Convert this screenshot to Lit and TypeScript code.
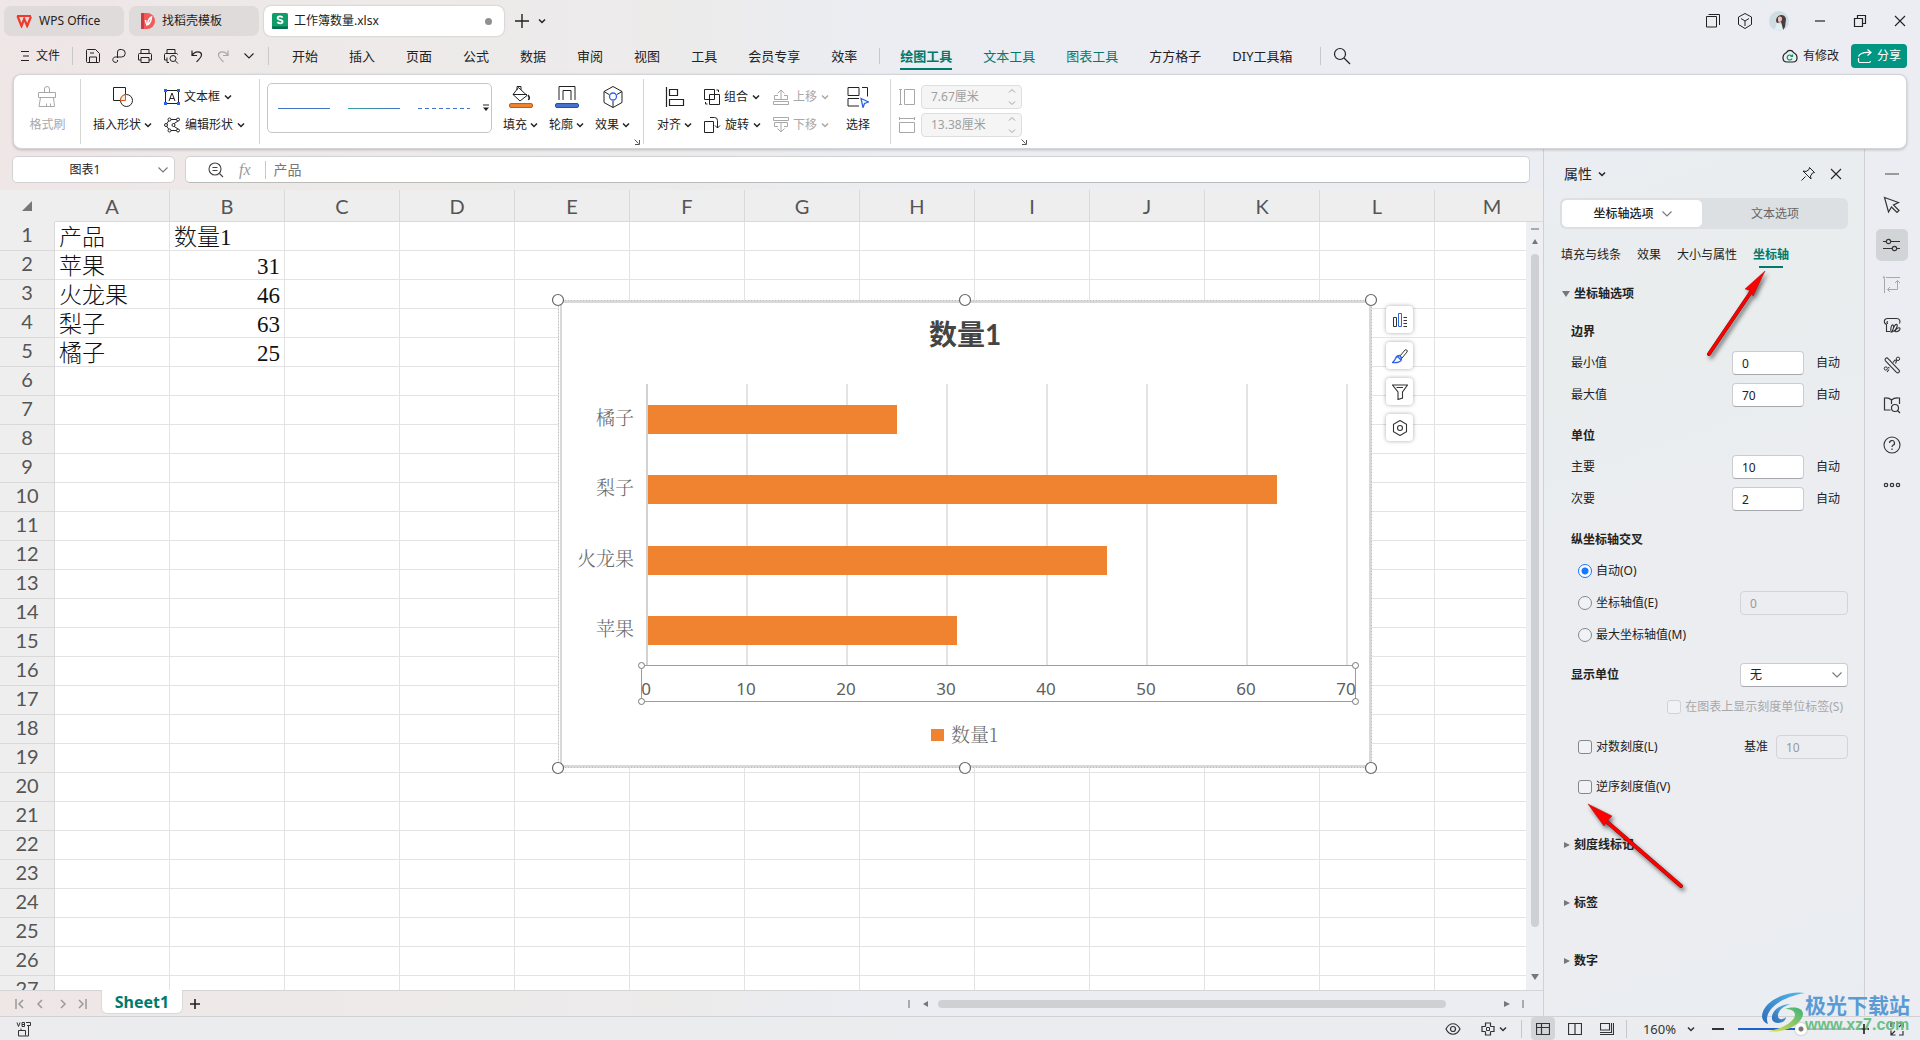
import { LitElement, html, svg, css, TemplateResult, SVGTemplateResult } from "lit";
import { customElement } from "lit/decorators.js";
import { classMap } from "lit/directives/class-map.js";

const icon = (w: number, h: number, body: SVGTemplateResult): TemplateResult =>
  html`<svg class="ic" width=${w} height=${h} viewBox="0 0 ${w} ${h}" fill="none" stroke="currentColor" aria-hidden="true">${body}</svg>`;

const chev = () => icon(8, 6, svg`<path d="M1 1.500l3 3 3-3" stroke-width="1.500"/>`);
const thinChev = () => icon(12, 8, svg`<path d="M1.500 1.500L6 6l4.500-4.500" stroke-width="1.100"/>`);

const I = {
  wps: icon(16, 14, svg`<path d="M1 2h14M1.500 2l4 10L8.200 5l3 7L15 2.500" stroke="#f0392b" stroke-width="2.200"/>`),
  docer: icon(14, 16, svg`<path d="M0 0h6a8 8 0 0 1 0 16H0z" fill="#f05a5a" stroke="none"/><path d="M0 0h3v16H0z" fill="#c93c40" stroke="none"/><path d="M5 12c4 0 5-3 5.500-8C8 5 7 8 6.500 11M6.500 12C5 11 4.500 9 4.500 7" stroke="#fff" stroke-width="1.500"/>`),
  sheet: icon(16, 16, svg`<rect width="16" height="16" rx="1.500" fill="#0f9d6a" stroke="none"/><path d="M0 13.500h16v1a1.500 1.500 0 0 1-1.500 1.500h-13A1.500 1.500 0 0 1 0 14.500z" fill="#0a6a4a" stroke="none"/><path d="M10.600 4.600C9.800 3 5.600 3 5.600 5.200c0 2.200 5 1.100 5 3.400 0 2.300-4.300 2.100-5.200.4" stroke="#fff" stroke-width="1.800"/>`),
  plus: icon(14, 14, svg`<path d="M7 0v14M0 7h14" stroke-width="1.400"/>`),
  menu: icon(10, 12, svg`<path d="M1 1.500h8M3 6h6M1 10.500h8" stroke-width="1.200"/>`),
  save: icon(16, 16, svg`<path d="M1.500 2.500a1 1 0 0 1 1-1h8l4 4v8a1 1 0 0 1-1 1h-11a1 1 0 0 1-1-1zM4.500 14v-5h7v5M5 5h4"/>`),
  pdf: icon(16, 16, svg`<path d="M6.500 10V4a2.500 2.500 0 0 1 2.500-2.500h1.500a3 3 0 0 1 0 7.500H4.500a2.700 2.700 0 1 0 2 4.500V12"/>`),
  print: icon(16, 16, svg`<path d="M4 5V1.500h8V5M4 12H1.500V6.500a1 1 0 0 1 1-1h11a1 1 0 0 1 1 1V12H12M4 9.500h8v5H4z"/>`),
  preview: icon(16, 16, svg`<path d="M4 5V1.500h8V5M4 12H1.500V6.500a1 1 0 0 1 1-1h11a1 1 0 0 1 1 1M4 9.500v5h2"/><circle cx="10" cy="10.500" r="3"/><path d="M12.200 12.700L15 15.500"/>`),
  undo: icon(14, 14, svg`<path d="M2 1.500v5h5M2 6.500C5 1.500 11.500 2 11.500 6c0 3-3 4.500-5 7" stroke-width="1.200"/>`),
  redo: icon(14, 14, svg`<path d="M12 1.500v5H7M12 6.500C9 1.500 2.500 2 2.500 6c0 3 3 4.500 5 7" stroke-width="1.200"/>`),
  search: icon(18, 18, svg`<circle cx="7" cy="7" r="5.500" stroke-width="1.200"/><path d="M11 11l6 6" stroke-width="1.300"/>`),
  cloud: icon(18, 16, svg`<path d="M5.500 4.500a4 4 0 0 1 7 0c5 2.500 4.500 9.500-.5 9.500H6C1 14 .5 7 5.500 4.500z" stroke-width="1.200"/><path d="M11.500 6.500v2H9.500M11 8.500a2.500 2.500 0 1 0 0 2" stroke="#0a9a5a" stroke-width="1.200"/>`),
  share: icon(16, 16, svg`<path d="M1.500 10v3a1.500 1.500 0 0 0 1.500 1.500h9a1.500 1.500 0 0 0 1.500-1.500M1.500 8.500C3 4.500 7 4 13.500 4.500M10.500 1.500l3.500 3-3.500 3" stroke-width="1.200"/>`),
  win: icon(16, 16, svg`<path d="M1.500 3.500h10v10.500h-10zM3.500 1.500h11V12" />`),
  cube: icon(16, 18, svg`<path d="M8 1.500l6.500 3.500v7.500L8 16.500l-6.500-4V5zM4 6.500l4 2.500 4-2.500M8 9v5"/>`),
  min: icon(12, 12, svg`<path d="M1 6h10" stroke-width="1.200"/>`),
  restore: icon(14, 14, svg`<path d="M1.500 4.500h8v8h-8zM4.500 4.500v-3h8v8h-3" stroke-width="1.200"/>`),
  close: icon(12, 12, svg`<path d="M1 1l10 10M11 1L1 11" stroke-width="1.100"/>`),
  painter: icon(22, 22, svg`<path d="M2.500 6.500h17v5h-17zM8.500 6.500V3a2.500 2.500 0 0 1 5 0v3.500M4.500 11.500L3 20.500h15.500l-1-9M10.500 20.500v-3M14.500 20.500v-3"/>`),
  shapes: icon(22, 22, svg`<path d="M13.500 8V1.500h-12v13H8" /><circle cx="14.500" cy="14.500" r="6"/><path d="M8.500 14.500A6 6 0 0 1 13.500 8.600v5.900z" stroke="#d05a1a" fill="#fde7da"/>`),
  textbox: icon(16, 16, svg`<path d="M3 1.500h10M3 14.500h10M1.500 3v10M14.500 3v10M5 12l3-8 3 8M6 9.500h4"/><path d="M0 0h3v3H0zM13 0h3v3h-3zM0 13h3v3H0zM13 13h3v3h-3z" fill="#2f62e8" stroke="none"/>`),
  editshape: icon(17, 16, svg`<path d="M6 2.500h7M5 3.500L2.500 7M2.500 9L5 12.500M6 13.500h7M14 4L9.500 7M9.500 9L14 12"/><circle cx="5.500" cy="2.500" r="1.500" fill="#fff"/><circle cx="14" cy="2.500" r="1.500" fill="#fff"/><circle cx="2" cy="8" r="1.500" fill="#fff"/><circle cx="9.500" cy="8" r="1.500" fill="#fff"/><circle cx="5.500" cy="13.500" r="1.500" fill="#fff"/><circle cx="14" cy="13.500" r="1.500" fill="#fff"/>`),
  more: icon(8, 8, svg`<path d="M1 1h6" /><path d="M1 3.500h6L4 7z" fill="currentColor" stroke="none"/>`),
  fill: icon(26, 24, svg`<path d="M10.500 2.500l8.500 8-7 5.500-7-6.500zM9 5V1.500h4V5M5 9.500h14"/><path d="M20 10c2 3 1.500 4.500 0 4.500" stroke-width="1.500"/><rect x="1.500" y="18.500" width="23" height="4" rx="1.500" fill="#ef8330" stroke="#b5611e"/>`),
  outline: icon(26, 24, svg`<path d="M5 15V1.500h16V15M9 15V5.500h8V15"/><rect x="1.500" y="18.500" width="23" height="4" rx="1.500" fill="#4472d0" stroke="#2b4fa0"/>`),
  effect: icon(22, 24, svg`<path d="M11 1.500l9 5v11l-9 5-9-5v-11zM2 6.500l5 3M20 6.500l-5 3M11 22.500V16"/><circle cx="11" cy="11.500" r="3.500" stroke="#2f62e8" stroke-width="1.300"/>`),
  align: icon(20, 20, svg`<path d="M1.500 0v20M4.500 2.500h8v6h-8zM4.500 12.500h14v6h-14z" stroke-width="1.200"/>`),
  group: icon(16, 16, svg`<path d="M.5.5h10v10H.5zM5.500 5.500h10v10h-10zM14.500 1v2M14.500 1h-2M1.500 13v2M1.500 15h2"/>`),
  rotate: icon(17, 16, svg`<path d="M.5 4.500h9v11h-9zM6 .5h4.500a3 3 0 0 1 3 3V11M11 8.500l2.500 2.500L16 8.500"/>`),
  up: icon(16, 16, svg`<path d="M8 11V1M4.500 4.500L8 1l3.500 3.500M5 6.500H1.500v4h13v-4H11M.5 12.500h15v3H.5z"/>`),
  down: icon(16, 16, svg`<path d="M8 5v10M4.500 11.500L8 15l3.500-3.500M5 9.500H1.500v-4h13v4H11M.5.5h15v3H.5z"/>`),
  select: icon(22, 22, svg`<path d="M1 9.500V1.500h11v8zM15 1.500h5.500v9M12 12.500H1v7.500h11"/><path d="M14 12.500l7.500 3.500-4 1.500L16 21.500z" stroke="#2f62e8" stroke-width="1.300"/>`),
  hgt: icon(16, 16, svg`<path d="M5.500.5h10v15h-10zM1.500 1v14M0 .5h3M0 15.500h3"/>`),
  wid: icon(16, 16, svg`<path d="M.5 5.500h15v10H.5zM1 1.500h14M.5 0v3M15.500 0v3"/>`),
  launch: icon(6, 6, svg`<path d="M.5.5l4 4M5.500 1v4.500H1" />`),
  spin: icon(8, 18, svg`<path d="M1 4.500l3-3 3 3M1 13.500l3 3 3-3"/>`),
  zoomIc: icon(16, 16, svg`<circle cx="7" cy="7" r="6" stroke-width="1.100"/><path d="M4.500 5.500h5M4.500 8.500h5M11.500 11.500L15 15" stroke-width="1.100"/>`),
  pin: icon(16, 16, svg`<path d="M9.500 1.500l5 5-2 .5-2 3 .5 3-8-8 3 .5 3-2zM5.500 10.500L1.500 14.500"/>`),
  cursor: icon(18, 18, svg`<path d="M1.500 1.500l14 5-5 2.500 5.500 5.500-2 2-5.500-5.500-3 5z" stroke-width="1.200"/>`),
  sliders: icon(18, 16, svg`<path d="M0 4.500h3M8 4.500h9M0 11.500h9M14 11.500h3" stroke-width="1.200"/><circle cx="5.500" cy="4.500" r="2.200" stroke-width="1.200"/><circle cx="11.500" cy="11.500" r="2.200" stroke-width="1.200"/>`),
  frame: icon(18, 18, svg`<path d="M3 1.500h14M1.500 3v14M14.500 4.500v9h-10M12 7l2.500-2.500L17 7M7 11l-2.500 2.500L7 16"/><path d="M0 .5h2v2H0z" fill="currentColor" stroke="none"/>`),
  idea: icon(18, 18, svg`<path d="M7 15.500H3.500v-7C0 7 1 2.500 4.500 2.500h9c3.500 0 4 3 3 5M5 5.500c-1.500 0-1.500 2 0 2M8 16c-.8-4 .8-8 2-7s.5 6-2 7zM9 16c1.500-5 3.500-8.500 4.800-7.500S13 15 9 16zM12 15.500c1-2.500 3.500-4.500 4.700-3.500s-1.200 4.500-4.700 3.500z" stroke-width="1.100"/>`),
  tools: icon(18, 18, svg`<path d="M2.500 4.800a1.700 1.700 0 0 1 2.600-2.200L16 14a1.700 1.700 0 0 1-2.500 2.300z" stroke-width="1.100"/><circle cx="15" cy="2.800" r="1.700"/><circle cx="2.800" cy="12.500" r="1.600"/><path d="M10 6.500l2-2.500 2.500.5M5 11.500l1.500.5M6 13.500L4 16M13.500 5l-1 2.500" stroke-width="1.100"/>`),
  book: icon(18, 18, svg`<path d="M8.500 4C6 1.500 3.500 2 1.500 2v12h6M8.500 4c2.500-2.500 5-2 8-2v6M8.500 4v4" stroke-width="1.200"/><circle cx="12" cy="12" r="3.500" stroke-width="1.200"/><path d="M14.500 14.500L17 17" stroke-width="1.200"/>`),
  help: icon(18, 18, svg`<circle cx="9" cy="9" r="8" stroke-width="1.100"/><path d="M6.500 7a2.500 2.500 0 1 1 3.500 2.300c-.8.400-1 .8-1 1.700M9 12.500V14" stroke-width="1.200"/>`),
  dots: icon(18, 6, svg`<circle cx="3" cy="3" r="1.700" stroke-width="1.200"/><circle cx="9" cy="3" r="1.700" stroke-width="1.200"/><circle cx="15" cy="3" r="1.700" stroke-width="1.200"/>`),
  minus: icon(14, 4, svg`<path d="M0 2h14" stroke-width="2" stroke="#9a9a9a"/>`),
  vb: icon(16, 16, svg`<path d="M1 1.500l1.500 4L4 1.500M6 1.500v4h2.500v-4zM6 3.500h2.500M10 1.500h4.500v3H11M12.500 5v10H2.500V9.500h7v5M5 9.500V7.500"/>`),
  eye: icon(16, 14, svg`<path d="M1 7c3.500-7 10.500-7 14 0-3.500 7-10.500 7-14 0z" stroke-width="1.200"/><circle cx="8" cy="7" r="2.500" stroke-width="1.200"/>`),
  focus: icon(14, 14, svg`<path d="M4.500 4.500V1h5v3.500M9.500 4.500H13v5H9.500M9.500 9.500V13h-5V9.500M4.500 9.500H1v-5h3.500" stroke-width="1.200"/><path d="M5.500 5.500h3v3h-3z"/>`),
  normal: icon(14, 12, svg`<path d="M.5.5h13v11H.5zM.5 4.500h13M5.500.5v11" stroke-width="1.200"/>`),
  pageb: icon(14, 12, svg`<path d="M.5.5h13v11H.5zM7 .5v11" stroke-width="1.200"/>`),
  layout: icon(14, 12, svg`<path d="M.5.500h9v6.500h-9zM11.500 0v9.500H0M13.500 0v11.500H0" stroke-width="1.100"/>`),
  full: icon(14, 14, svg`<path d="M8.500 1h4.500v4.500M13 1L9 5M5.500 13H1V8.500M1 13l4-4M1 5V1h4M13 9v4H9" stroke-width="1.200"/>`),
  chart: icon(16, 16, svg`<path d="M1.500 5.500h3v9h-3z"/><path d="M6.500 1.500h3v13h-3z" stroke="#2f62e8"/><path d="M11.500 5.500H15M11.500 8.500H15M11.500 11.500H15M11.500 14.500H15"/>`),
  brush: icon(16, 16, svg`<path d="M8 8l5-6c1-1 3 .5 2 2l-5 6z"/><path d="M8 7.500c-3 0-4 1.500-4.500 3S2 13.500.500 14.500c4 .5 9 0 9-4zM5.500 8.500l3.500 3.500" stroke="#2f62e8" stroke-width="1.300"/>`),
  funnel: icon(16, 16, svg`<path d="M.5 1h15L10.500 8v6l-4.500 1.500V8zM4.500 3.500h6.500" stroke-width="1.100"/>`),
  hex: icon(16, 16, svg`<path d="M8 .5l6.500 3.800v7.400L8 15.500l-6.500-3.800V4.300z" stroke-width="1.100"/><circle cx="8" cy="8" r="2.500" stroke-width="1.100"/>`),
};

@customElement("bar-chart")
class BarChart extends LitElement {
  static styles = css`
    :host { display: block; }
    svg { display: block; }
    .zh { font-family: "Noto Serif CJK SC", "Noto Sans CJK SC", serif; font-weight: 300; font-size: 19px; fill: #6a6a6a; }
    .title { font-family: Lato, "Noto Sans CJK SC", sans-serif; font-weight: 700; font-size: 28px; fill: #444; }
    .tick { font-family: "Noto Sans", sans-serif; font-size: 17px; fill: #5e5e5e; }
  `;
  rows = [
    { name: "橘子", value: 25 },
    { name: "梨子", value: 63 },
    { name: "火龙果", value: 46 },
    { name: "苹果", value: 31 },
  ];
  render() {
    const ticks = [0, 10, 20, 30, 40, 50, 60, 70];
    const handles = [[8, 8], [415, 8], [821, 8], [8, 476], [415, 476], [821, 476]];
    return html`<svg width="830" height="484" viewBox="0 0 830 484" role="img" aria-label="数量1">
      <rect x="8" y="8" width="814" height="468" fill="#fff" />
      <rect x="8.5" y="8.500" width="813" height="467" fill="none" stroke="#bdbdbd" stroke-dasharray="2 1" />
      <rect x="11" y="10" width="809" height="464" fill="#fff" stroke="#d8d8d8" stroke-width="2" />
      <text class="title" x="415" y="53" text-anchor="middle">数量1</text>
      ${ticks.map((t) => svg`<rect x=${96 + t * 10} y="92" width="2" height="281" fill=${t ? "#e3e3e3" : "#d2d2d2"} />`)}
      ${this.rows.map((r, i) => svg`
        <rect x="98" y=${113 + Math.round(i * 70.4)} width=${r.value * 10 - 1} height="29" fill="#ef8330" />
        <text class="zh" x="84" y=${133 + Math.round(i * 70.4)} text-anchor="end">${r.name}</text>`)}
      <rect x="91.5" y="373.500" width="714" height="36" fill="none" stroke="#9a9da6" />
      ${ticks.map((t) => svg`<text class="tick" x=${96 + t * 10} y="403" text-anchor="middle">${t}</text>`)}
      ${[[91, 373], [805, 373], [91, 409], [805, 409]].map((p) => svg`<circle cx=${p[0] + 0.5} cy=${p[1] + 0.5} r="3" fill="#fff" stroke="#777" />`)}
      <rect x="381" y="437" width="13" height="12" fill="#ef8330" />
      <text class="zh" x="401" y="450">数量1</text>
      ${handles.map((p) => svg`<circle cx=${p[0]} cy=${p[1]} r="5.500" fill="#fff" stroke="#666" stroke-width="1.200" />`)}
    </svg>`;
  }
}

@customElement("app-root")
class AppRoot extends LitElement {
  static styles = css`
    :host { display: block; }
    * { box-sizing: border-box; }
    .app {
      display: flex; flex-direction: column; position: relative; height: 100vh; overflow: hidden;
      font: 12px/16px "Noto Sans", "Noto Sans CJK SC", sans-serif; color: #222;
      background: linear-gradient(90deg, #efe6e6 0, #edeae9 20%, #ecebeb 36%, #ebedf2 46%, #ebedf2 100%);
    }
    button, input, select { font: inherit; color: inherit; margin: 0; }
    button { border: 0; padding: 0; background: none; display: inline-flex; align-items: center; justify-content: center; white-space: nowrap; }
    a { color: inherit; text-decoration: none; white-space: nowrap; }
    .ic { display: block; flex: none; }
    .row { display: flex; align-items: center; }
    .grow { flex: 1; }
    .off { color: #a8a8a8; }

    .titlebar { display: flex; align-items: center; height: 42px; flex: none; padding: 0 14px 0 4px; gap: 5px; }
    .wtab { height: 30px; border-radius: 7px; background: #dfdbda; display: flex; align-items: center; justify-content: flex-start; padding: 0 12px; gap: 7px; }
    .wtab.home { width: 120px; }
    .wtab.docer { width: 130px; }
    .wtab.on { width: 240px; background: #fff; padding: 0 12px 0 8px; gap: 6px; box-shadow: 0 0 2px #0004; }
    .dot { width: 7px; height: 7px; border-radius: 50%; background: #909090; margin-left: auto; }
    .newtab { gap: 9px; margin-left: 6px; }
    .wins { gap: 16px; }
    .wbtns { gap: 27px; padding-left: 20px; }
    .avatar { width: 20px; height: 20px; }

    .menubar { display: flex; align-items: center; height: 28px; flex: none; padding: 0 13px 0 20px; }
    .file { gap: 6px; margin-right: 12px; }
    .vsep { width: 1px; height: 18px; background: #c8c8ca; flex: none; }
    .quick { gap: 10px; padding: 0 11px 0 12px; }
    .quick button { width: 16px; height: 16px; }
    .menu { display: flex; gap: 31px; padding: 0 27px 0 23px; font-size: 13px; line-height: 28px; }
    .menu .ctx { color: #007a6c; }
    .menu .on { font-weight: 700; box-shadow: inset 0 -2px #007a6c; }
    .menu .split { width: 1px; height: 16px; background: #c8c8ca; margin: 6px -11px 0 -9px; }
    .find { padding-left: 12px; }
    .modified { gap: 4px; margin-right: 12px; }
    .share { background: #009682; color: #fff; height: 24px; padding: 0 6px; gap: 4px; border-radius: 4px; width: 56px; }

    .ribbon { display: flex; flex: none; height: 75px; margin: 4px 13px 0; background: #fff; border: 1px solid #d3d4d8; border-radius: 8px; box-shadow: 0 1px 3px #0003; position: relative; z-index: 1; }
    .grp { display: flex; padding-top: 8px; position: relative; }
    .grp + .grp::before { content: ""; position: absolute; left: -1px; top: 4px; bottom: 4px; width: 1px; background: #d5d5d5; }
    .big { display: grid; grid-template-rows: 28px 28px; justify-items: center; align-items: center; }
    .lbl { display: flex; align-items: center; gap: 3px; }
    .col { display: grid; grid-template-rows: 28px 28px; align-items: center; justify-items: start; }
    .col button { gap: 4px; }
    .g1 { width: 67px; justify-content: center; }
    .g2 { width: 179px; padding-left: 12px; gap: 12px; }
    .g3 { width: 384px; padding-left: 7px; gap: 11px; }
    .g4 { width: 247px; padding-left: 13px; gap: 12px; }
    .g5 { width: 140px; padding-left: 8px; }
    .g5 label { gap: 6px; height: 28px; }
    .gallery { width: 225px; height: 50px; border: 1px solid #c6c6c8; border-radius: 5px; display: flex; align-items: center; padding: 0 0 0 10px; gap: 18px; }
    .line { width: 52px; border-top: 1px solid #4472c4; }
    .line.teal { border-image: linear-gradient(90deg, #35a79c, #4472c4) 1; }
    .line.dash { border: 0; height: 1px; background: repeating-linear-gradient(90deg, #4472c4 0 4px, transparent 4px 7px); }
    .gallery button { margin-left: -6px; }
    .launch { position: absolute; right: 4px; bottom: 3px; color: #555; }
    .sel { margin-left: 5px; }
    .size { display: flex; align-items: center; width: 101px; height: 24px; border: 1px solid #dedede; border-radius: 4px; background: #f5f5f5; color: #a0a0a0; padding-right: 5px; }
    .size input { flex: 1; min-width: 0; border: 0; background: none; padding: 0 0 0 9px; outline: 0; color: #a0a0a0; }

    .body { display: flex; flex: 1; min-height: 0; }
    .work { flex: 1; min-width: 0; display: flex; flex-direction: column; }
    .fbar { display: flex; height: 41px; flex: none; padding: 7px 13px 7px 12px; gap: 10px; color: #777; }
    .namebox { width: 163px; background: #fff; border: 1px solid #d2d2d4; border-radius: 5px; display: flex; align-items: center; padding-right: 5px; }
    .namebox input { flex: 1; min-width: 0; border: 0; padding: 0; text-align: center; background: none; color: #222; }
    .formula { flex: 1; background: #fff; border: 1px solid #d2d2d4; border-bottom-color: #b9bcbb; border-radius: 5px; display: flex; align-items: center; padding-left: 22px; color: #444; }
    .fx { font: italic 16px/20px "Liberation Serif", serif; color: #999; margin: 0 14px 0 15px; }
    .formula input { flex: 1; border: 0; background: none; font-size: 14px; color: #777; padding: 0 8px; }

    .sheet { flex: 1; min-height: 0; display: flex; border-bottom: 1px solid #d4d5d8; }
    .view { flex: 1; min-width: 0; overflow: hidden; position: relative; background: #fff; }
    table { border-spacing: 0; table-layout: fixed; width: 1550px; }
    .rh { width: 55px; }
    th { background: #eee; color: #555; font: 400 20px/24px Lato, sans-serif; padding: 0; border-right: 1px solid #d9d9d9; border-bottom: 1px solid #d9d9d9; }
    thead th { height: 32px; }
    thead th:first-child { border: 0; border-right: 1px solid #eee; }
    tbody th { height: 29px; padding-bottom: 4px; }
    td { border-right: 1px solid #e3e3e3; border-bottom: 1px solid #e3e3e3; padding: 4px 3px 0 4px; font: 300 23px/24px "Liberation Serif", "Noto Sans CJK SC", serif; color: #111; height: 29px; }
    .num { text-align: right; padding-right: 4px; }
    .corner { display: flex; justify-content: flex-end; padding-right: 22px; }
    .object { position: absolute; left: 550px; top: 102px; }
    .tools { position: absolute; left: 1386px; top: 116px; display: grid; gap: 9px; }
    .tools button { width: 27px; height: 27px; background: #fff; border-radius: 4px; box-shadow: 0 0 4px #0005; color: #333; }
    .vs { width: 17px; display: flex; flex-direction: column; align-items: center; flex: none; background: #edeff2; color: #777; }
    .vs .top { align-self: stretch; height: 32px; background: #eee; border-bottom: 1px solid #d9d9d9; }
    .vs .cut { width: 8px; height: 2px; background: #aaa; margin: 6px 0 8px; }
    .vs .thumb { width: 8px; background: #cfd0d4; border-radius: 4px; flex: 1; margin: 8px 0 46px; }
    .vs .dn { margin-bottom: 9px; }

    .tabs { display: flex; align-items: center; height: 25px; flex: none; color: #999; }
    .nav { gap: 12px; padding: 0 15px; width: 101px; }
    .stab { align-self: stretch; width: 82px; background: #fff; color: #007a6c; font-size: 16px; font-weight: 700; border: 1px solid #d9d9d9; border-top: 0; border-radius: 0 0 6px 6px; margin: -1px 7px 2px 0; }
    .add { color: #222; }
    .hs { flex: none; width: 616px; margin-right: 19px; display: flex; align-items: center; color: #777; }
    .hs .cut { width: 2px; height: 8px; background: #aaa; }
    .hs .thumb { flex: none; width: 508px; height: 8px; border-radius: 4px; background: #cfd0d4; margin: 0 auto 0 8px; }
    .hs .lf { margin-left: 12px; }
    .hs .rt { margin-right: 12px; }

    .pane { width: 322px; flex: none; border: 1px solid #cfd1d5; border-width: 0 1px; padding: 13px 16px 0 16px; background: linear-gradient(160deg, #ebedf2 0, #e9edee 20%, #ecedf1 50%, #ecedf1 80%, #e9edf2 100%); display: flex; flex-direction: column; }
    .phead { display: flex; align-items: center; height: 24px; font-size: 14px; gap: 6px; padding: 0 6px 0 4px; }
    .phead button:last-child { margin-left: 8px; }
    .seg { display: grid; grid-template-columns: 140px 1fr; background: #dde0e3; border-radius: 6px; height: 31px; padding: 2px; margin-top: 12px; flex: none; }
    .seg button { color: #666; gap: 7px; padding-left: 2px; }
    .seg .on { background: #fff; border-radius: 5px; color: #222; font-weight: 500; }
    .seg .ic { color: #777; }
    .ptabs { display: flex; gap: 16px; margin: 14px 1px 0; line-height: 24px; flex: none; }
    .ptabs .on { color: #007a6c; font-weight: 700; display: grid; justify-items: center; }
    .ptabs .on::after { content: ""; width: 24px; height: 2px; background: #007a6c; margin-top: -1px; }
    .sec { display: flex; align-items: center; gap: 4px; height: 32px; font-weight: 700; justify-content: flex-start; padding-left: 2px; flex: none; color: #222; }
    .sec .ic { color: #777; }
    .first { margin-top: 10px; }
    .next { margin-top: 26px; }
    .prop { display: flex; align-items: center; height: 32px; padding-left: 11px; flex: none; }
    .prop.hd { font-weight: 700; height: 24px; }
    .prop.h1 { margin-top: 10px; margin-bottom: 3px; }
    .prop.h2 { margin-top: 13px; margin-bottom: 3px; }
    .prop.gap8 { margin-top: 8px; }
    .prop.chk { padding-left: 18px; }
    .prop .name { flex: 1; }
    .box { width: 72px; height: 24px; border: 1px solid #c9ccd0; border-bottom-color: #a5a8ad; border-radius: 4px; background: #fff; padding: 0 0 0 9px; outline: 0; }
    .box.w { width: 108px; }
    .box:disabled { background: #ecedf0; border-color: #d2d4d8; color: #999; }
    .auto { width: 44px; padding-left: 12px; }
    .choice { appearance: none; width: 14px; height: 14px; border: 1px solid #85888c; border-radius: 3px; margin: 0 4px 0 0; background: #f1f2f5; flex: none; }
    .choice[type="radio"] { border-radius: 50%; }
    .choice:checked { border-color: #1677ff; background: radial-gradient(circle, #1677ff 3px, #fff 4px); }
    .choice:disabled { border-color: #cfd1d5; }
    .pick { position: relative; display: flex; align-items: center; }
    .pick select { appearance: none; }
    .pick .ic { position: absolute; right: 5px; color: #777; pointer-events: none; }
    .right { justify-content: flex-end; padding-right: 5px; }
    .base { margin-right: 8px; }
    .rail { width: 55px; flex: none; display: flex; flex-direction: column; align-items: center; padding: 21px 1px 0 0; color: #333; }
    .rail button { width: 32px; height: 32px; margin-bottom: 8px; }
    .rail button.mini { height: 8px; margin-bottom: 11px; }
    .rail .on { background: #d2d5d8; border-radius: 5px; }

    .status { display: flex; align-items: center; height: 24px; flex: none; border-top: 1px solid #cfd1d5; padding: 0 16px; color: #333; background: linear-gradient(90deg, #ececee, #ebecef 60%, #eaedf1); }
    .st1 { gap: 4px; }
    .st1 button:first-child { margin-right: 16px; }
    .st1 .mr { margin-right: 14px; }
    .views { gap: 8px; padding: 0 7px 0 9px; }
    .views button { width: 24px; height: 23px; }
    .views .on { background: #d2d5d8; border-radius: 4px; }
    .pct { font-size: 13px; padding: 0 11px 0 16px; }
    .zm { padding: 0 14px 0 17px; }
    .zoom { appearance: none; width: 113px; height: 12px; margin: 0 8px 0 0; background: linear-gradient(90deg, #1d62cf 62px, #b8bbc0 62px) center / 100% 2px no-repeat; }
    .zoom::-webkit-slider-thumb { appearance: none; width: 12px; height: 12px; border-radius: 50%; background: radial-gradient(circle, #777 2px, #fff 3px); box-shadow: 0 0 2px #0006; }
    .fs { margin-left: 21px; }

    .mark { position: absolute; right: 10px; bottom: 6px; display: flex; align-items: center; font-family: "Noto Sans CJK SC", sans-serif; pointer-events: none; z-index: 3; }
    .mark strong { display: block; font-size: 21px; line-height: 24px; color: #5b9bd5; }
    .mark span { display: block; font: 700 16px/18px "Liberation Sans", sans-serif; color: #6cbf84; }
    .arrow { position: absolute; z-index: 2; pointer-events: none; filter: drop-shadow(2px 3px 2px #0008); }
    .a1 { right: 145px; top: 265px; }
    .a2 { right: 231px; top: 798px; }
  `;

  cells: Record<string, string> = {
    A1: "产品", B1: "数量1", A2: "苹果", B2: "31", A3: "火龙果", B3: "46", A4: "梨子", B4: "63", A5: "橘子", B5: "25",
  };
  cols = "ABCDEFGHIJKLM".split("");
  rowsN = Array.from({ length: 27 }, (_, i) => i + 1);

  tri(kind: string) {
    const d: Record<string, string> = { up: "M4 1l3 5H1z", down: "M4 7l4-6H0z", left: "M1 4l5-3v6z", right: "M8 4L2 1v6z", fold: "M7 4L1 0v8z" };
    return icon(8, 8, svg`<path d=${d[kind]} fill="currentColor" stroke="none"/>`);
  }

  title_() {
    return html`<header class="titlebar">
      <button class="wtab home">${I.wps}WPS Office</button>
      <button class="wtab docer">${I.docer}找稻壳模板</button>
      <button class="wtab on">${I.sheet}工作簿数量.xlsx<span class="dot"></span></button>
      <div class="row newtab"><button aria-label="新建">${I.plus}</button><button aria-label="更多">${chev()}</button></div>
      <div class="grow"></div>
      <div class="row wins">
        <button aria-label="窗口">${I.win}</button><button aria-label="应用">${I.cube}</button>
        <svg class="avatar" viewBox="0 0 20 20"><circle cx="10" cy="10" r="10" fill="#cfdde2"/><path d="M7 10c0-7 9-8 10-2l-1 8-2 3-1-5-1-3-4 1z" fill="#4a3b40"/><path d="M9 7c1-2 4-2 4 1s-3 4-4 2z" fill="#eec3b5"/><path d="M5 20l3-8 4 1 2 6z" fill="#e3eef2"/></svg>
      </div>
      <div class="row wbtns"><button aria-label="最小化">${I.min}</button><button aria-label="还原">${I.restore}</button><button aria-label="关闭">${I.close}</button></div>
    </header>`;
  }

  menu_() {
    const m = (t: string, c = {}) => html`<a href="#" class=${classMap(c)}>${t}</a>`;
    return html`<nav class="menubar">
      <button class="file">${I.menu}文件</button>
      <span class="vsep"></span>
      <div class="row quick">
        <button aria-label="保存">${I.save}</button><button aria-label="输出为PDF">${I.pdf}</button><button aria-label="打印">${I.print}</button>
        <button aria-label="打印预览">${I.preview}</button><button aria-label="撤销">${I.undo}</button><button class="off" aria-label="恢复">${I.redo}</button>
        <button aria-label="更多">${thinChev()}</button>
      </div>
      <span class="vsep"></span>
      <div class="menu">
        ${["开始", "插入", "页面", "公式", "数据", "审阅", "视图", "工具", "会员专享", "效率"].map((t) => m(t))}
        <span class="split"></span>
        ${m("绘图工具", { ctx: true, on: true })}${m("文本工具", { ctx: true })}${m("图表工具", { ctx: true })}${m("方方格子")}${m("DIY工具箱")}
      </div>
      <span class="vsep"></span>
      <button class="find" aria-label="搜索">${I.search}</button>
      <div class="grow"></div>
      <button class="modified">${I.cloud}有修改</button>
      <button class="share">${I.share}分享</button>
    </nav>`;
  }

  ribbon_() {
    const big = (ic: TemplateResult, t: string, drop = true, c = "") =>
      html`<button class="big ${c}">${ic}<span class="lbl">${t}${drop ? chev() : ""}</span></button>`;
    const sm = (ic: TemplateResult, t: string, c = "") => html`<button class=${c}>${ic}${t}${chev()}</button>`;
    return html`<section class="ribbon">
      <div class="grp g1">${big(I.painter, "格式刷", false, "off")}</div>
      <div class="grp g2">${big(I.shapes, "插入形状")}<div class="col">${sm(I.textbox, "文本框")}${sm(I.editshape, "编辑形状")}</div></div>
      <div class="grp g3">
        <div class="gallery"><span class="line"></span><span class="line teal"></span><span class="line dash"></span><button aria-label="更多样式">${I.more}</button></div>
        ${big(I.fill, "填充")}${big(I.outline, "轮廓")}${big(I.effect, "效果")}
        <button class="launch" aria-label="形状设置">${I.launch}</button>
      </div>
      <div class="grp g4">${big(I.align, "对齐")}
        <div class="col">${sm(I.group, "组合")}${sm(I.rotate, "旋转")}</div>
        <div class="col">${sm(I.up, "上移", "off")}${sm(I.down, "下移", "off")}</div>
        ${big(I.select, "选择", false, "sel")}
      </div>
      <div class="grp g5"><div>
        <label class="row off">${I.hgt}<span class="size"><input aria-label="高度" disabled .value=${"7.67厘米"}>${I.spin}</span></label>
        <label class="row off">${I.wid}<span class="size"><input aria-label="宽度" disabled .value=${"13.38厘米"}>${I.spin}</span></label>
        </div><button class="launch" aria-label="大小设置">${I.launch}</button>
      </div>
    </section>`;
  }

  work_() {
    return html`<main class="work">
      <div class="fbar">
        <div class="namebox"><input aria-label="名称框" .value=${"图表1"}>${thinChev()}</div>
        <div class="formula">${I.zoomIc}<span class="fx">fx</span><span class="vsep"></span><input aria-label="编辑栏" .value=${"产品"}></div>
      </div>
      <div class="sheet">
        <div class="view">
          <table>
            <thead><tr><th class="rh"><span class="corner">${icon(10, 10, svg`<path d="M10 0v10H0z" fill="#777" stroke="none"/>`)}</span></th>${this.cols.map((c) => html`<th scope="col">${c}</th>`)}</tr></thead>
            <tbody>${this.rowsN.map((r) => html`<tr><th scope="row">${r}</th>${this.cols.map((c) => {
              const v = this.cells[c + r] ?? "";
              return html`<td class=${/^\d+$/.test(v) ? "num" : ""}>${v}</td>`;
            })}</tr>`)}</tbody>
          </table>
          <bar-chart class="object"></bar-chart>
          <div class="tools">
            <button aria-label="图表元素">${I.chart}</button><button aria-label="图表样式">${I.brush}</button>
            <button aria-label="图表筛选器">${I.funnel}</button><button aria-label="设置图表区域格式">${I.hex}</button>
          </div>
        </div>
        <div class="vs"><span class="top"></span><span class="cut"></span>${this.tri("up")}<span class="thumb"></span><span class="dn">${this.tri("down")}</span></div>
      </div>
      <div class="tabs">
        <div class="row nav">
          <button aria-label="第一张">${icon(9, 10, svg`<path d="M1 0v10M8 1L4 5l4 4" stroke-width="1.500"/>`)}</button>
          <button aria-label="上一张">${icon(9, 10, svg`<path d="M6 1L2 5l4 4" stroke-width="1.500"/>`)}</button>
          <button aria-label="下一张">${icon(9, 10, svg`<path d="M4 1l4 4-4 4" stroke-width="1.500"/>`)}</button>
          <button aria-label="最后一张">${icon(9, 10, svg`<path d="M8 0v10M1 1l4 4-4 4" stroke-width="1.500"/>`)}</button>
        </div>
        <button class="stab">Sheet1</button>
        <button class="add" aria-label="新建工作表">${icon(10, 10, svg`<path d="M5 0v10M0 5h10" stroke-width="1.600"/>`)}</button>
        <div class="grow"></div>
        <div class="hs"><span class="cut"></span><span class="lf">${this.tri("left")}</span><span class="thumb"></span><span class="rt">${this.tri("right")}</span><span class="cut"></span></div>
      </div>
    </main>`;
  }

  pane_() {
    const num = (id: string, t: string, v: string) => html`<div class="prop"><label class="name" for=${id}>${t}</label><input id=${id} class="box" .value=${v}><span class="auto">自动</span></div>`;
    return html`<aside class="pane">
      <div class="phead">属性 ${chev()}<span class="grow"></span><button aria-label="固定">${I.pin}</button><button aria-label="关闭">${I.close}</button></div>
      <div class="seg"><button class="on">坐标轴选项${thinChev()}</button><button>文本选项</button></div>
      <div class="ptabs"><a href="#">填充与线条</a><a href="#">效果</a><a href="#">大小与属性</a><a href="#" class="on">坐标轴</a></div>
      <button class="sec first">${this.tri("down")}坐标轴选项</button>
      <div class="prop hd h1">边界</div>
      ${num("min", "最小值", "0")}${num("max", "最大值", "70")}
      <div class="prop hd h2">单位</div>
      ${num("maj", "主要", "10")}${num("mnr", "次要", "2")}
      <div class="prop hd h2">纵坐标轴交叉</div>
      <div class="prop chk"><input type="radio" class="choice" name="cross" id="c1" checked><label for="c1">自动(O)</label></div>
      <div class="prop chk"><input type="radio" class="choice" name="cross" id="c2"><label class="name" for="c2">坐标轴值(E)</label><input class="box w" aria-label="坐标轴值" disabled .value=${"0"}></div>
      <div class="prop chk"><input type="radio" class="choice" name="cross" id="c3"><label for="c3">最大坐标轴值(M)</label></div>
      <div class="prop gap8"><label class="name" for="unit"><b>显示单位</b></label><span class="pick"><select id="unit" class="box w"><option>无</option></select>${thinChev()}</span></div>
      <div class="prop right off"><input type="checkbox" class="choice" id="k1" disabled><label for="k1">在图表上显示刻度单位标签(S)</label></div>
      <div class="prop chk gap8"><input type="checkbox" class="choice" id="k2"><label class="name" for="k2">对数刻度(L)</label><label class="base" for="base">基准</label><input id="base" class="box" disabled .value=${"10"}></div>
      <div class="prop chk gap8"><input type="checkbox" class="choice" id="k3"><label for="k3">逆序刻度值(V)</label></div>
      ${["刻度线标记", "标签", "数字"].map((t) => html`<button class="sec next">${this.tri("right")}${t}</button>`)}
    </aside>`;
  }

  render() {
    return html`<div class="app">
      ${this.title_()}${this.menu_()}${this.ribbon_()}
      <div class="body">${this.work_()}${this.pane_()}
        <div class="rail">
          <button class="mini" aria-label="收起">${I.minus}</button>
          <button aria-label="选择">${I.cursor}</button><button class="on" aria-label="属性">${I.sliders}</button><button class="off" aria-label="自适应">${I.frame}</button>
          <button aria-label="分析">${I.idea}</button><button aria-label="工具">${I.tools}</button><button aria-label="查阅">${I.book}</button>
          <button aria-label="帮助">${I.help}</button><button aria-label="更多">${I.dots}</button>
        </div>
      </div>
      <footer class="status">
        ${I.vb}<span class="grow"></span>
        <div class="row st1"><button aria-label="护眼模式">${I.eye}</button><button aria-label="阅读模式">${I.focus}</button><span class="mr">${chev()}</span></div>
        <span class="vsep"></span>
        <div class="row views"><button class="on" aria-label="普通视图">${I.normal}</button><button aria-label="分页预览">${I.pageb}</button><button aria-label="页面布局">${I.layout}</button></div>
        <span class="vsep"></span>
        <span class="pct">160%</span>${chev()}
        <button class="zm" aria-label="缩小">${icon(12, 12, svg`<path d="M0 6h12" stroke-width="2"/>`)}</button>
        <input class="zoom" type="range" aria-label="缩放" min="0" max="100" value="56">
        <button aria-label="放大">${icon(10, 10, svg`<path d="M5 0v10M0 5h10" stroke-width="1.800"/>`)}</button>
        <button class="fs" aria-label="全屏">${I.full}</button>
      </footer>
      <svg class="arrow a1" width="72" height="96" viewBox="1703 265 72 96"><path d="M1709 354L1751 292" stroke="#7a1010" stroke-width="4" stroke-linecap="round"/><path d="M1709 354L1751 292" stroke="#f00" stroke-width="3" stroke-linecap="round"/><path d="M1765 271L1745 289L1751 291L1753 296z" fill="#f00" stroke="#a01010" stroke-width=".5"/></svg>
      <svg class="arrow a2" width="107" height="96" viewBox="1582 798 107 96"><path d="M1681 886L1606 821" stroke="#7a1010" stroke-width="4" stroke-linecap="round"/><path d="M1681 886L1606 821" stroke="#f00" stroke-width="3" stroke-linecap="round"/><path d="M1588 804L1612 816L1608 820L1604 826z" fill="#f00" stroke="#a01010" stroke-width=".5"/></svg>
      <div class="mark">
        <svg width="44" height="42" viewBox="0 0 44 42"><defs><linearGradient id="g1" x1="0" y1="1" x2="1" y2="0"><stop offset="0" stop-color="#2b6cb8"/><stop offset="1" stop-color="#58b9ea"/></linearGradient><linearGradient id="g2" x1="0" y1="1" x2="1" y2="0"><stop offset="0" stop-color="#e6e04a"/><stop offset="1" stop-color="#3db27a"/></linearGradient></defs>
        <path d="M44 1C28-2 2 8 1 24c0 4 3 7 6 8C2 20 16 6 44 1z" fill="url(#g1)"/><path d="M30 12C18 12 10 20 11 27c1 6 14 5 14-2-3 3-8 3-8-1 0-6 6-10 13-12z" fill="url(#g1)"/><path d="M24 17c10-3 18-1 18 5C41 33 22 42 6 39c12-1 27-8 28-16 0-4-4-6-10-6z" fill="url(#g2)"/></svg>
        <div><strong>极光下载站</strong><span>www.xz7.com</span></div>
      </div>
    </div>`;
  }
}
